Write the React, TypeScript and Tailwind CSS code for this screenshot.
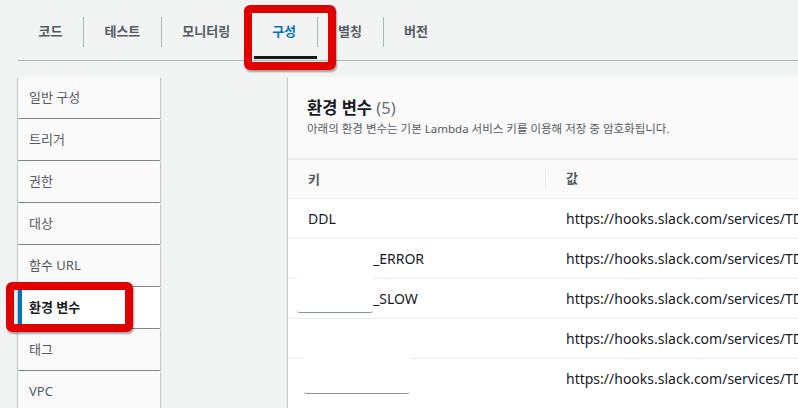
import React from 'react'

const tabs = ['코드', '테스트', '모니터링', '구성', '별칭', '버전']
const navItems = ['일반 구성', '트리거', '권한', '대상', '함수 URL', '환경 변수', '태그', 'VPC']
const url = 'https://hooks.slack.com/services/TD'

const rows = [
	{ key: 'DDL', pad: false },
	{ key: '_ERROR', pad: true },
	{ key: '_SLOW', pad: true },
	{ key: '', pad: false },
	{ key: '', pad: false },
]

const cardShadow = 'shadow-[0_1px_1px_0_rgba(0,28,36,0.3),1px_1px_1px_0_rgba(0,28,36,0.15),-1px_1px_1px_0_rgba(0,28,36,0.15)]'

export default function App() {
	return (
		<div
			className="relative w-[798px] h-[408px] overflow-hidden bg-[#f2f3f3] text-[#16191f]"
			style={{ fontFamily: '"Noto Sans", "Noto Sans CJK KR", sans-serif' }}
		>
			{/* tabs */}
			<div className="ml-[18px] h-[61px] flex items-stretch border-b border-[#aab7b8]">
				{tabs.map((t, i) => (
					<React.Fragment key={t}>
						{i > 0 && <div className="w-px h-[30px] mt-[17px] bg-[#aab7b8]" />}
						<div className="relative flex items-center px-[20.5px] pt-[3px] text-[13px] font-bold">
							<span className={t === '구성' ? 'text-[#0073bb]' : 'text-[#545b64]'}>{t}</span>
							{t === '구성' && <div className="absolute left-[2px] right-0 bottom-[1px] h-[3px] bg-[#16191f]" />}
						</div>
					</React.Fragment>
				))}
			</div>

			<div className="flex pt-4">
				{/* side nav */}
				<div className="ml-[18px] w-[142px] flex flex-col gap-px shrink-0">
					{navItems.map(n => {
						const active = n === '환경 변수'
						return (
							<div
								key={n}
								className={`h-[41px] flex items-center text-[13px] ${cardShadow} ${
									active
										? 'bg-white font-bold text-[#16191f] border-l-[4px] border-[#0073bb] pl-[7px]'
										: 'bg-[#fafafa] text-[#545b64] pl-[11px]'
								}`}
							>
								{n}
							</div>
						)
					})}
				</div>

				{/* main panel */}
				<div className={`ml-[128px] w-[560px] shrink-0 bg-white ${cardShadow}`}>
					<div className="bg-[#fafafa] px-[19px] pt-[19px] pb-[20px]">
						<h2 className="text-[16.5px] leading-[24px] font-bold">
							환경 변수 <span className="font-normal text-[#687078]">(5)</span>
						</h2>
						<p className="text-[11.5px] leading-[18px] text-[#545b64]">
							아래의 환경 변수는 기본 Lambda 서비스 키를 이용해 저장 중 암호화됩니다.
						</p>
					</div>
					<div className="h-[40px] flex items-center bg-[#fafafa] border-t-2 border-[#eaeded] text-[13px] font-bold text-[#545b64]">
						<div className="w-[258px] shrink-0 pl-5 border-r border-[#eaeded] leading-[20px]">키</div>
						<div className="pl-5">값</div>
					</div>
					{rows.map((r, i) => (
						<div key={i} className="h-[40px] flex items-center border-t border-[#eaeded] text-[14px] whitespace-nowrap">
							<div className="w-[258px] shrink-0 pl-5">
								{r.pad && <span className="inline-block w-[65px]" />}
								{r.key}
							</div>
							<div className="pl-5">{url}</div>
						</div>
					))}
				</div>
			</div>

			{/* redactions */}
			<div className="absolute left-[297px] top-[242px] w-[76px] h-[71px] bg-white border-b border-[#879596] rounded-b-[3px]" />
			<div className="absolute left-[304px] top-[320px] w-[106px] h-[74px] bg-white border-b border-[#879596] rounded-b-[3px]" />

			{/* red highlight boxes */}
			<div className="absolute left-[244px] top-[5px] w-[92px] h-[65px] border-[8px] border-[#e00000] rounded-[6px] shadow-[1px_2px_2px_rgba(0,0,0,0.35)]" />
			<div className="absolute left-[6px] top-[282px] w-[127px] h-[50px] border-[8px] border-[#e00000] rounded-[6px] shadow-[1px_2px_2px_rgba(0,0,0,0.35)]" />
		</div>
	)
}
